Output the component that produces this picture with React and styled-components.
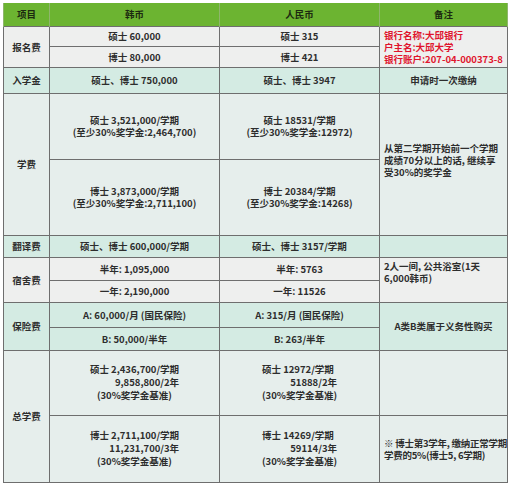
import React from "react";
import styled, { createGlobalStyle } from "styled-components";

const GlobalStyle = createGlobalStyle`
  html, body {
    margin: 0;
    padding: 0;
    background: #ffffff;
  }
`;

const tones = {
  head: "#6cb431",
  gray: "#eeefee",
  teal: "#d4ebe3",
  mint: "#e6eeec",
};

const Page = styled.div`
  padding: 3px 0 0 3px;
  font-family: "Noto Sans CJK SC", "Noto Sans", sans-serif;
`;

const Table = styled.table`
  border-collapse: collapse;
  table-layout: fixed;
  width: 505px;
  font-size: 9.5px;
  font-weight: 700;
  color: #2d2d2d;
`;

const Row = styled.tr`
  background: ${(p) => tones[p.$tone]};
  height: ${(p) => p.$h}px;
`;

const HeadCell = styled.th`
  background: ${tones.head};
  color: #1c2a10;
  font-weight: 700;
  border-left: 1px solid #8fb56c;
  border-right: 1px solid #8fb56c;
  padding: 0;
  text-align: center;
`;

const Cell = styled.td`
  border: 1px solid #6e6e6e;
  padding: 0 ${(p) => (p.$left ? "2px 0 4px" : "2px")};
  padding-bottom: ${(p) => p.$lift || 0}px;
  text-align: ${(p) => (p.$left ? "left" : "center")};
  vertical-align: middle;
  line-height: 12px;
  white-space: nowrap;
  overflow: hidden;
`;

const Red = styled.div`
  color: #e0142d;
  line-height: 12px;
`;

const Stack = styled.div`
  display: inline-block;
  text-align: left;
  line-height: 13px;
`;

const Line = styled.div`
  text-align: ${(p) => p.$align || "left"};
  padding-left: ${(p) => p.$indent || 0}px;
`;

const Note = styled.div`
  line-height: 12px;
  letter-spacing: ${(p) => p.$tight || 0}px;
`;

export default function App() {
  return (
    <Page>
      <GlobalStyle />
      <Table>
        <colgroup>
          <col style={{ width: 46 }} />
          <col style={{ width: 170 }} />
          <col style={{ width: 160 }} />
          <col style={{ width: 128 }} />
        </colgroup>
        <thead>
          <Row $tone="head" $h={23}>
            <HeadCell>项目</HeadCell>
            <HeadCell>韩币</HeadCell>
            <HeadCell>人民币</HeadCell>
            <HeadCell>备注</HeadCell>
          </Row>
        </thead>
        <tbody>
          <Row $tone="gray" $h={20}>
            <Cell rowSpan={2}>报名费</Cell>
            <Cell>硕士 60,000</Cell>
            <Cell>硕士 315</Cell>
            <Cell rowSpan={2} $left>
              <Red>银行名称:大邱银行</Red>
              <Red>户主名:大邱大学</Red>
              <Red>银行账户:207-04-000373-8</Red>
            </Cell>
          </Row>
          <Row $tone="gray" $h={21}>
            <Cell>博士 80,000</Cell>
            <Cell>博士 421</Cell>
          </Row>
          <Row $tone="teal" $h={26}>
            <Cell>入学金</Cell>
            <Cell>硕士、博士 750,000</Cell>
            <Cell>硕士、博士 3947</Cell>
            <Cell>申请时一次缴纳</Cell>
          </Row>
          <Row $tone="mint" $h={66}>
            <Cell rowSpan={2}>学费</Cell>
            <Cell>
              <Line $align="center">硕士 3,521,000/学期</Line>
              <Line $align="center">(至少30%奖学金:2,464,700)</Line>
            </Cell>
            <Cell>
              <Line $align="center">硕士 18531/学期</Line>
              <Line $align="center">(至少30%奖学金:12972)</Line>
            </Cell>
            <Cell rowSpan={2} $left $lift={8}>
              <Note>从第二学期开始前一个学期</Note>
              <Note>成绩70分以上的话, 继续享</Note>
              <Note>受30%的奖学金</Note>
            </Cell>
          </Row>
          <Row $tone="mint" $h={76}>
            <Cell>
              <Line $align="center">博士 3,873,000/学期</Line>
              <Line $align="center">(至少30%奖学金:2,711,100)</Line>
            </Cell>
            <Cell>
              <Line $align="center">博士 20384/学期</Line>
              <Line $align="center">(至少30%奖学金:14268)</Line>
            </Cell>
          </Row>
          <Row $tone="teal" $h={22}>
            <Cell>翻译费</Cell>
            <Cell>硕士、博士 600,000/学期</Cell>
            <Cell>硕士、博士 3157/学期</Cell>
            <Cell />
          </Row>
          <Row $tone="gray" $h={23}>
            <Cell rowSpan={2}>宿舍费</Cell>
            <Cell>半年: 1,095,000</Cell>
            <Cell>半年: 5763</Cell>
            <Cell rowSpan={2} $left $lift={16}>
              <Note>2人一间, 公共浴室(1天</Note>
              <Note>6,000韩币)</Note>
            </Cell>
          </Row>
          <Row $tone="gray" $h={22}>
            <Cell>一年: 2,190,000</Cell>
            <Cell>一年: 11526</Cell>
          </Row>
          <Row $tone="teal" $h={25}>
            <Cell rowSpan={2}>保险费</Cell>
            <Cell>A: 60,000/月 (国民保险)</Cell>
            <Cell>A: 315/月 (国民保险)</Cell>
            <Cell rowSpan={2}>A类B类属于义务性购买</Cell>
          </Row>
          <Row $tone="teal" $h={23}>
            <Cell>B: 50,000/半年</Cell>
            <Cell>B: 263/半年</Cell>
          </Row>
          <Row $tone="mint" $h={65}>
            <Cell rowSpan={2}>总学费</Cell>
            <Cell>
              <Stack>
                <Line>硕士 2,436,700/学期</Line>
                <Line $align="right">9,858,800/2年</Line>
                <Line $indent={7}>(30%奖学金基准)</Line>
              </Stack>
            </Cell>
            <Cell>
              <Stack>
                <Line>硕士 12972/学期</Line>
                <Line $align="right">51888/2年</Line>
                <Line>(30%奖学金基准)</Line>
              </Stack>
            </Cell>
            <Cell />
          </Row>
          <Row $tone="mint" $h={67}>
            <Cell>
              <Stack>
                <Line>博士 2,711,100/学期</Line>
                <Line $align="right">11,231,700/3年</Line>
                <Line $indent={7}>(30%奖学金基准)</Line>
              </Stack>
            </Cell>
            <Cell>
              <Stack>
                <Line>博士 14269/学期</Line>
                <Line $align="right">59114/3年</Line>
                <Line>(30%奖学金基准)</Line>
              </Stack>
            </Cell>
            <Cell $left>
              <Note $tight={-0.25}>※ 博士第3学年, 缴纳正常学期</Note>
              <Note $tight={-0.25}>学费的5%(博士5, 6学期)</Note>
            </Cell>
          </Row>
        </tbody>
      </Table>
    </Page>
  );
}
